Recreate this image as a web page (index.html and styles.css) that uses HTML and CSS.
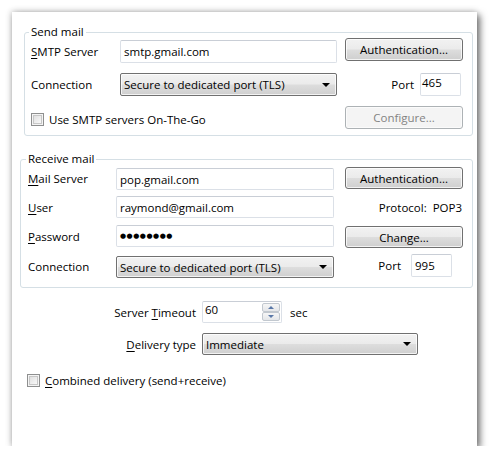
FILE: index.html
```html
<!DOCTYPE html>
<html>
<head>
<meta charset="utf-8">
<title>Mail settings</title>
<link rel="stylesheet" href="styles.css">
</head>
<body>
<div class="window">
  <div class="group send">
    <div class="group-title">Send mail</div>
    <div class="grid send-grid">
      <div class="lbl lbl-r1"><span><u>S</u>MTP Server</span></div>
      <div class="input in-r1">smtp.gmail.com</div>
      <div class="btn btn-r1">Authentication...</div>

      <div class="lbl">Connection</div>
      <div class="select">Secure to dedicated port (TLS)<span class="arrow"></span></div>
      <div class="port port-send"><span>Port</span><div class="input port-in">465</div></div>

      <div class="check-row span2 send-check"><span class="check"></span><span>Use SMTP servers On-The-Go</span></div>
      <div class="btn disabled">Configure...</div>
    </div>
  </div>

  <div class="group recv">
    <div class="group-title">Receive mail</div>
    <div class="grid recv-grid">
      <div class="lbl"><span><u>M</u>ail Server</span></div>
      <div class="input wide in-end">pop.gmail.com</div>
      <div class="btn btn-start">Authentication...</div>

      <div class="lbl"><span><u>U</u>ser</span></div>
      <div class="input wide">raymond@gmail.com</div>
      <div class="protocol">Protocol:&nbsp; POP3</div>

      <div class="lbl"><span><u>P</u>assword</span></div>
      <div class="input wide pw"><span class="dots">●●●●●●●●</span></div>
      <div class="btn btn-end">Change...</div>

      <div class="lbl">Connection</div>
      <div class="select wide sel-end">Secure to dedicated port (TLS)<span class="arrow"></span></div>
      <div class="port port-recv"><span>Port</span><div class="input port-in">995</div></div>
    </div>
  </div>

  <div class="bottom-grid">
    <div class="lbl right"><span>Server <u>T</u>imeout</span></div>
    <div class="timeout">
      <div class="input spin"><span>60</span>
        <span class="spin-btns"><span class="spin-up"><i></i></span><span class="spin-down"><i></i></span></span>
      </div>
      <span>sec</span>
    </div>
    <div class="lbl right"><span><u>D</u>elivery type</span></div>
    <div class="select delivery">Immediate<span class="arrow"></span></div>
  </div>

  <div class="check-row combined"><span class="check"></span><span><u>C</u>ombined delivery (send+receive)</span></div>
</div>
</body>
</html>
```
FILE: styles.css
```css
html, body {
  margin: 0;
  padding: 0;
  background: #ffffff;
}
body {
  font-family: "Open Sans", "Noto Sans", sans-serif;
  font-size: 11.5px;
  color: #000;
}
u { text-decoration: underline; text-underline-offset: 2px; }

.window {
  box-sizing: border-box;
  margin: 12px 0 0 12px;
  width: 465px;
  height: 434px;
  background: #fff;
  padding-top: 20px;
  box-shadow: 3px 3px 7px rgba(0,0,0,0.55), -1px -1px 6px rgba(0,0,0,0.18);
}

.group {
  border: 1px solid #d5dfe5;
  border-radius: 3px;
}
.group.send {
  margin: 0 4px 0 12px;
  padding: 0 8px 7px 6px;
}
.group.recv {
  margin: 23px 4px 0 8px;
  padding: 0 8px 9px 7px;
}
.group-title {
  width: fit-content;
  margin: -8px 0 0 -2px;
  padding: 0 2px;
  height: 14px;
  line-height: 14px;
  background: #fff;
}

.grid { display: grid; }
.send-grid {
  margin-top: -1px;
  grid-template-columns: 81px 217px 118px;
  column-gap: 8px;
  grid-template-rows: 25px 23px 22px;
  row-gap: 10px;
}
.recv-grid {
  margin-top: 1px;
  grid-template-columns: 88px 229px 118px;
  grid-template-rows: 23px 23px 23px 24px;
  row-gap: 6px;
}
.wide { width: 218px; }

.lbl {
  display: flex;
  align-items: center;
  white-space: nowrap;
}
.lbl-r1 { align-self: end; height: 23px; }
.lbl.right { justify-content: flex-end; }

.input {
  box-sizing: border-box;
  height: 23px;
  border: 1px solid #dbe0e7;
  border-top-color: #c9ced6;
  border-radius: 2px;
  background: #fff;
  padding: 0 3px;
  display: flex;
  align-items: center;
  white-space: nowrap;
}
.recv-grid .input { height: 22px; }
.in-r1 { align-self: end; }
.in-end { align-self: end; }

.btn, .select {
  box-sizing: border-box;
  height: 23px;
  border: 1px solid #707070;
  border-radius: 3px;
  background: linear-gradient(#f2f2f2 0%, #ebebeb 48%, #dddddd 52%, #cfcfcf 100%);
  box-shadow: inset 0 0 0 1px rgba(255,255,255,0.75);
  display: flex;
  align-items: center;
  white-space: nowrap;
}
.btn { justify-content: center; }
.btn-r1 { align-self: start; }
.recv-grid .btn { height: 22px; }
.btn-start { align-self: start; }
.btn-end { align-self: end; }
.btn.disabled {
  border-color: #adb2b5;
  background: #f4f4f4;
  box-shadow: inset 0 0 0 1px #fbfbfb;
  color: #838383;
}

.select {
  position: relative;
  padding-left: 3px;
  border-radius: 2px;
}
.recv-grid .select { height: 22px; }
.sel-end { align-self: end; }
.arrow {
  position: absolute;
  right: 6px;
  top: 50%;
  margin-top: -2px;
  width: 0;
  height: 0;
  border-left: 4px solid transparent;
  border-right: 4px solid transparent;
  border-top: 4px solid #000;
}

.port {
  display: flex;
  justify-content: flex-end;
  align-items: center;
}
.port-send { gap: 6px; padding-right: 2px; }
.port-send .port-in { align-self: stretch; }
.port-recv { gap: 10px; padding-right: 11px; align-self: start; }
.port-in {
  width: 41px;
  padding: 0 1px;
  align-items: flex-start;
  padding-top: 1px;
}
.recv-grid .port-in { height: 23px; align-items: center; padding: 0 3px; }

.protocol {
  display: flex;
  align-items: center;
  justify-content: flex-end;
  padding-right: 1px;
  white-space: nowrap;
}

.dots {
  font-family: "DejaVu Sans", sans-serif;
  font-size: 7px;
  letter-spacing: 0.5px;
}

.check-row {
  display: flex;
  align-items: center;
  gap: 5px;
  white-space: nowrap;
}
.span2 { grid-column: 1 / 3; }
.send-check { align-self: end; height: 16px; margin-bottom: 1px; }
.check {
  box-sizing: border-box;
  flex: none;
  width: 13px;
  height: 13px;
  border: 1px solid #8e8f8f;
  background: linear-gradient(135deg, #d9d9d9 0%, #f0f0f0 60%, #ffffff 100%);
  box-shadow: inset 0 0 0 1px #f4f4f4, inset 0 0 0 2px #c7c7c7;
}

.bottom-grid {
  display: grid;
  grid-template-columns: 184px auto;
  column-gap: 6px;
  grid-template-rows: 22px 22px;
  row-gap: 10px;
  margin-top: 13px;
}
.timeout {
  display: flex;
  align-items: center;
  gap: 8px;
}
.spin {
  position: relative;
  width: 80px;
  height: 22px;
  padding-left: 2px;
  align-items: flex-start;
}
.spin-btns {
  position: absolute;
  right: 1px;
  top: 1px;
  bottom: 1px;
  width: 18px;
  display: flex;
  flex-direction: column;
}
.spin-up, .spin-down {
  flex: 1;
  box-sizing: border-box;
  border: 1px solid #c2c8cf;
  border-radius: 2px;
  background: linear-gradient(#f6f6f6, #e4e6e9);
  display: flex;
  align-items: center;
  justify-content: center;
}
.spin-up i, .spin-down i {
  width: 0;
  height: 0;
  border-left: 3px solid transparent;
  border-right: 3px solid transparent;
}
.spin-up i { border-bottom: 3px solid #5a78a8; }
.spin-down i { border-top: 3px solid #5a78a8; }
.delivery {
  width: 216px;
  height: 22px;
}

.combined {
  margin: 18px 0 0 15px;
  height: 14px;
}
```
